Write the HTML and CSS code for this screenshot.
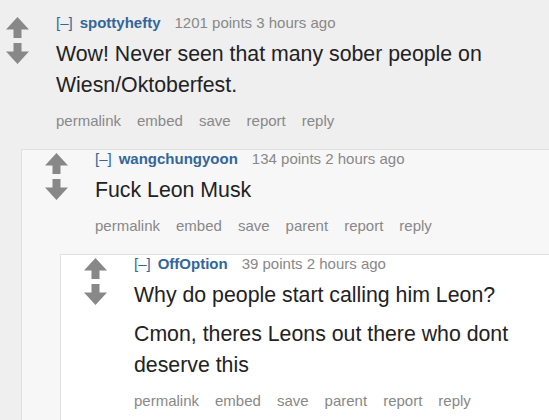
FILE: index.html
```html
<!DOCTYPE html>
<html>
<head>
<meta charset="utf-8">
<link rel="stylesheet" href="styles.css">
</head>
<body>
<div class="thread">
  <div class="comment top">
    <div class="row">
      <div class="midcol">
        <svg class="arrow" viewBox="0 0 23 21" width="23" height="21"><polygon points="11.5,0 23,12.5 15.5,12.5 15.5,21 7.5,21 7.5,12.5 0,12.5"/></svg>
        <svg class="arrow down" viewBox="0 0 23 21" width="23" height="21"><polygon points="11.5,21 23,8.5 15.5,8.5 15.5,0 7.5,0 7.5,8.5 0,8.5"/></svg>
      </div>
      <div class="entry">
        <p class="tagline"><span class="expand">[–]</span><span class="author">spottyhefty</span><span class="score">1201 points 3 hours ago</span></p>
        <div class="md"><p>Wow! Never seen that many sober people on Wiesn/Oktoberfest.</p></div>
        <ul class="buttons"><li>permalink</li><li>embed</li><li>save</li><li>report</li><li>reply</li></ul>
      </div>
    </div>
    <div class="comment even">
      <div class="row">
        <div class="midcol">
          <svg class="arrow" viewBox="0 0 23 21" width="23" height="21"><polygon points="11.5,0 23,12.5 15.5,12.5 15.5,21 7.5,21 7.5,12.5 0,12.5"/></svg>
          <svg class="arrow down" viewBox="0 0 23 21" width="23" height="21"><polygon points="11.5,21 23,8.5 15.5,8.5 15.5,0 7.5,0 7.5,8.5 0,8.5"/></svg>
        </div>
        <div class="entry">
          <p class="tagline"><span class="expand">[–]</span><span class="author">wangchungyoon</span><span class="score">134 points 2 hours ago</span></p>
          <div class="md"><p>Fuck Leon Musk</p></div>
          <ul class="buttons"><li>permalink</li><li>embed</li><li>save</li><li>parent</li><li>report</li><li>reply</li></ul>
        </div>
      </div>
      <div class="comment odd">
        <div class="row">
          <div class="midcol">
            <svg class="arrow" viewBox="0 0 23 21" width="23" height="21"><polygon points="11.5,0 23,12.5 15.5,12.5 15.5,21 7.5,21 7.5,12.5 0,12.5"/></svg>
            <svg class="arrow down" viewBox="0 0 23 21" width="23" height="21"><polygon points="11.5,21 23,8.5 15.5,8.5 15.5,0 7.5,0 7.5,8.5 0,8.5"/></svg>
          </div>
          <div class="entry">
            <p class="tagline"><span class="expand">[–]</span><span class="author">OffOption</span><span class="score">39 points 2 hours ago</span></p>
            <div class="md"><p>Why do people start calling him Leon?</p><p>Cmon, theres Leons out there who dont deserve this</p></div>
            <ul class="buttons"><li>permalink</li><li>embed</li><li>save</li><li>parent</li><li>report</li><li>reply</li></ul>
          </div>
        </div>
      </div>
    </div>
  </div>
</div>
</body>
</html>
```

FILE: styles.css
```css
html, body {
  margin: 0;
  padding: 0;
  background: #efefef;
  overflow: hidden;
}
body {
  width: 549px;
  height: 420px;
  font-family: "Liberation Sans", Arial, sans-serif;
}
.thread {
  margin-left: -17px;
  padding-top: 14px;
}
.comment.even,
.comment.odd {
  border-top: 1px solid #e0e0e0;
  border-left: 1px solid #e0e0e0;
  margin-left: 38px;
}
.comment.even { background: #f7f7f7; }
.comment.odd { background: #ffffff; }
.row {
  display: flex;
}
.midcol {
  flex: none;
  width: 50px;
  margin-left: 23px;
  padding-top: 3px;
  display: flex;
  flex-direction: column;
  gap: 5px;
}
.arrow {
  display: block;
  fill: #888888;
}
.entry {
  flex: 1;
  min-width: 0;
}
.tagline {
  margin: 0;
  font-size: 15px;
  line-height: 17px;
  color: #888888;
  white-space: nowrap;
}
.expand {
  color: #336699;
  margin-right: 7px;
}
.author {
  color: #336699;
  font-weight: bold;
  margin-right: 14px;
}
.md {
  margin-top: 8px;
  font-size: 21.3px;
  line-height: 31px;
  color: #222222;
  max-width: 440px;
}
.md p {
  margin: 0 0 8px 0;
}
.md p:last-child {
  margin-bottom: 0;
}
.buttons {
  list-style: none;
  margin: 10px 0 18px 0;
  padding: 0;
  display: flex;
  gap: 16px;
  font-size: 15px;
  line-height: 20px;
  color: #888888;
}
```
